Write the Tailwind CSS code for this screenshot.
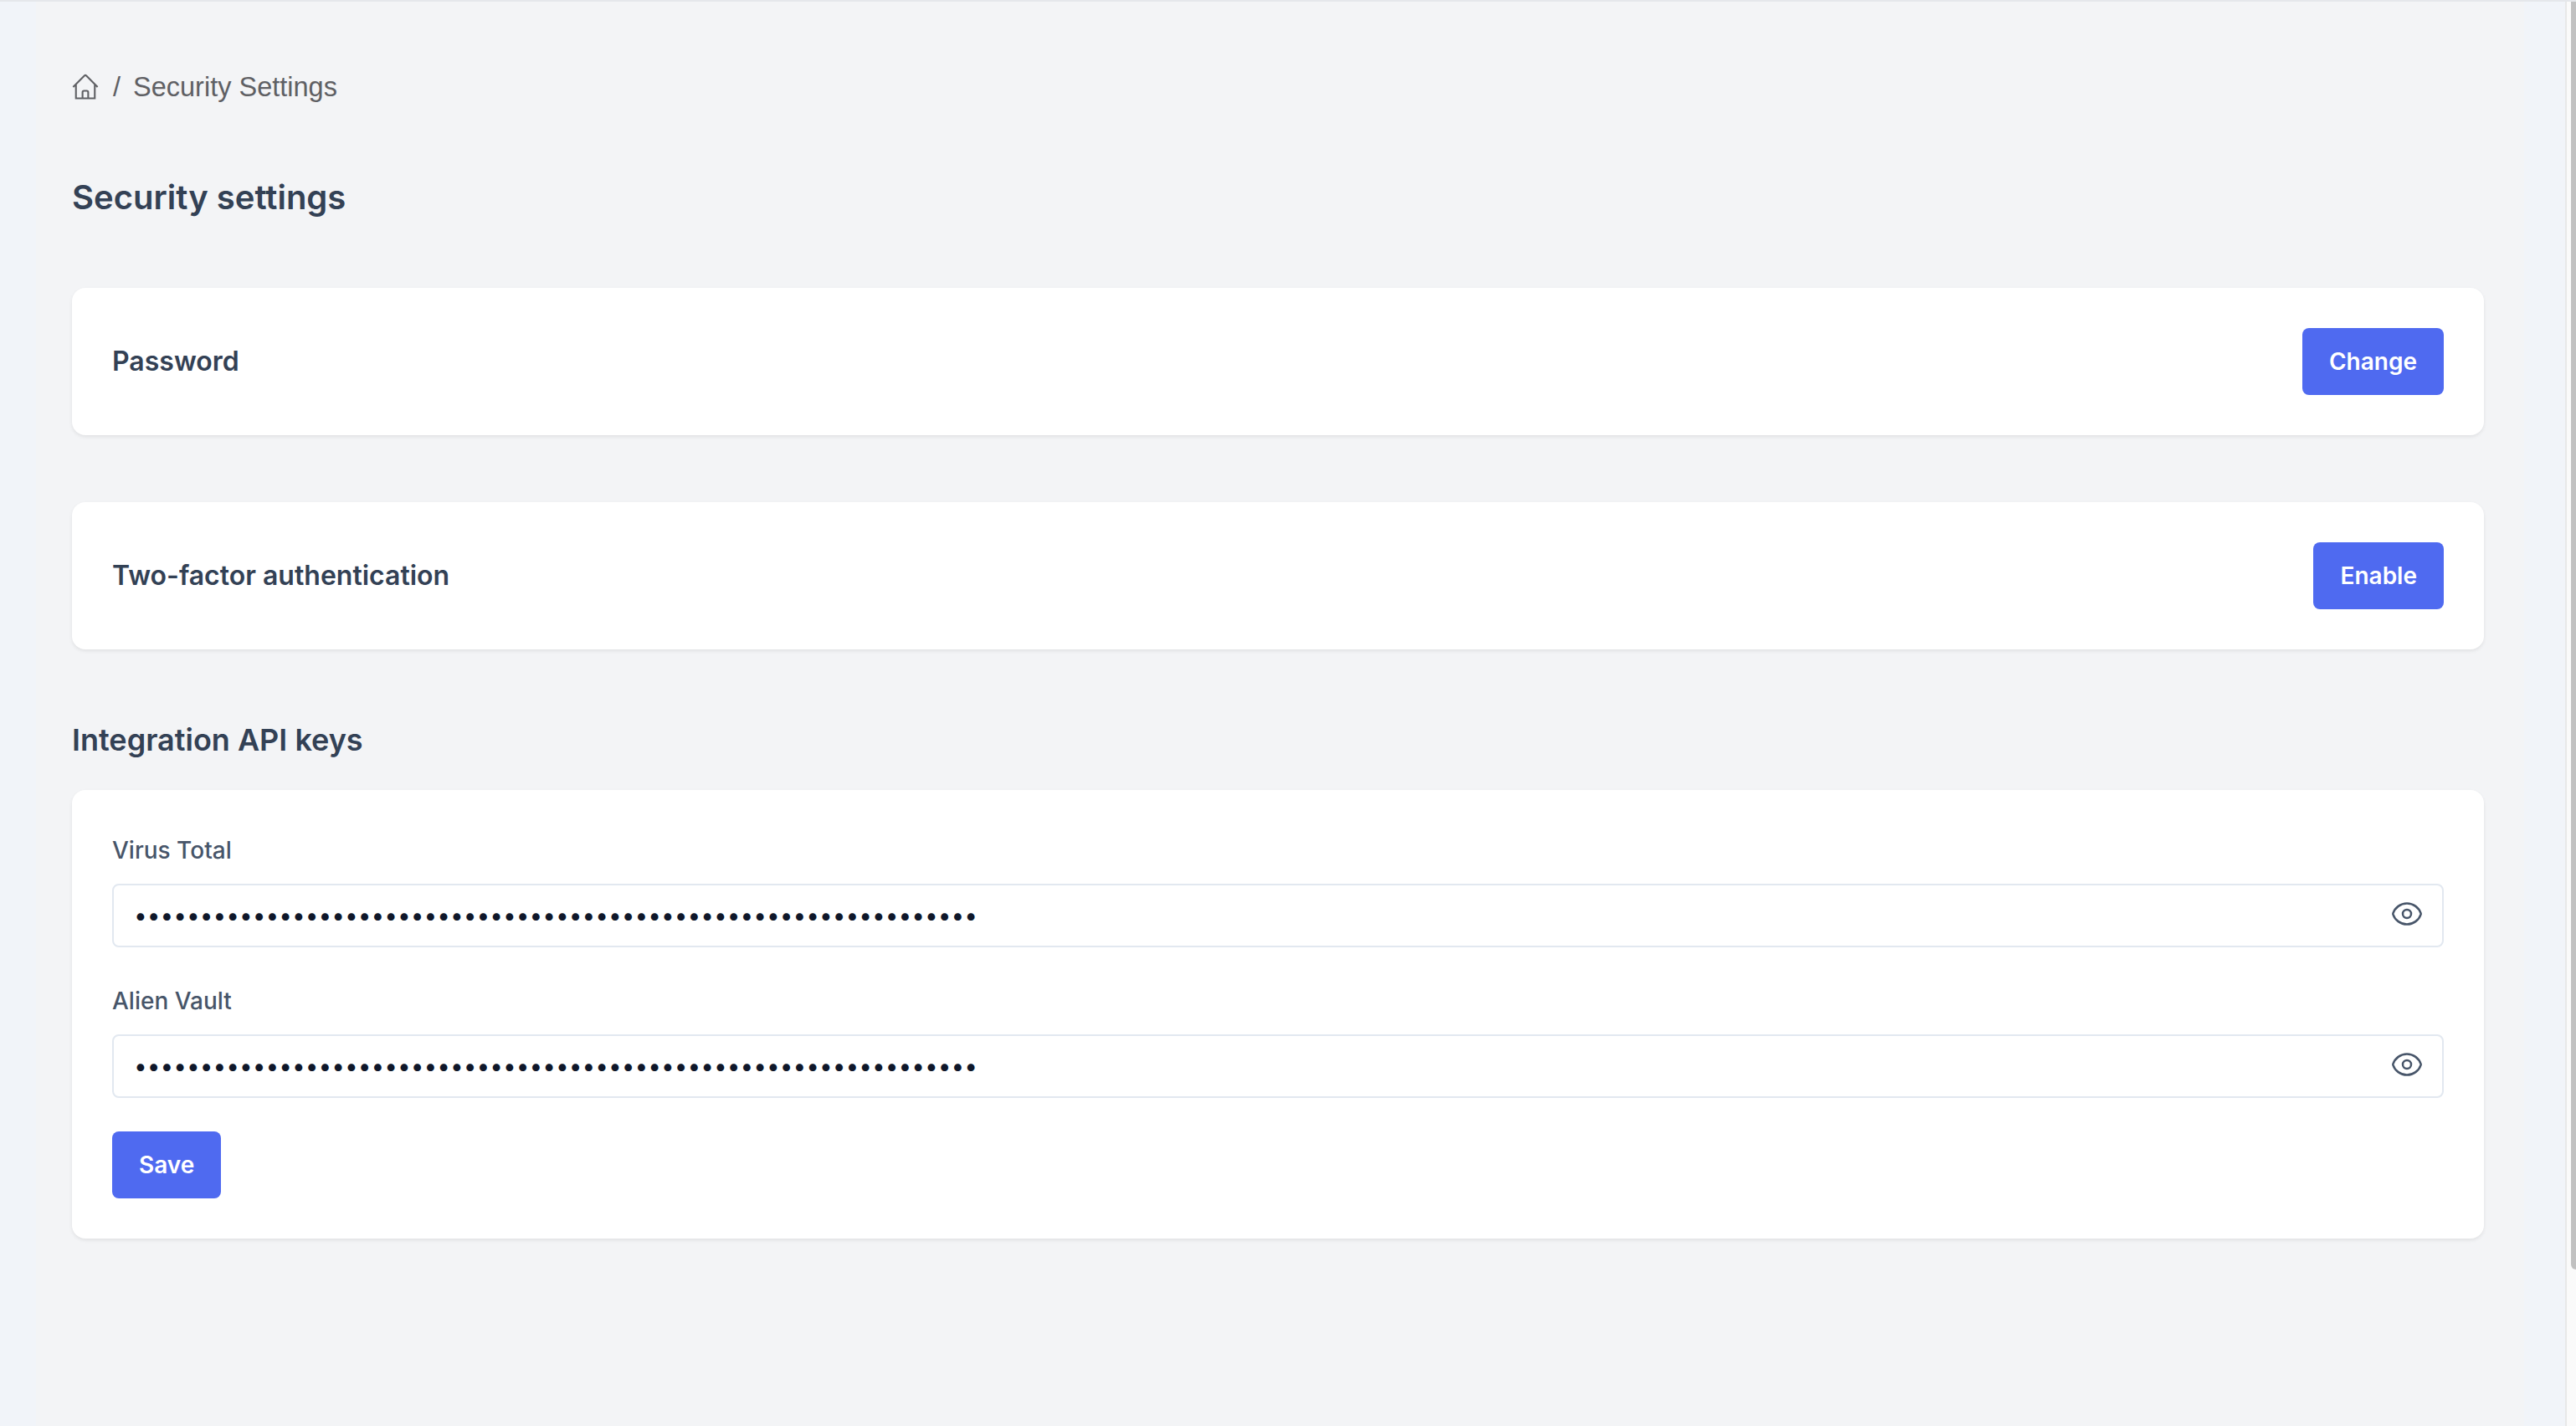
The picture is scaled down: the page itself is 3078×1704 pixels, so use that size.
<!DOCTYPE html>
<html lang="en">
<head>
  <meta charset="UTF-8">
  <title>Security Settings</title>
  <script src="https://cdn.jsdelivr.net/npm/@tailwindcss/browser@4"></script>
</head>
<body class="bg-[#f3f4f6] font-['Inter',sans-serif] overflow-hidden">
  <div class="flex h-screen border-t-2 border-[#e5e7eb]">
    <div class="w-[43px] shrink-0 bg-[#f1f4f9]"></div>

    <main class="w-[2973px] shrink-0 pl-[43px] pr-[48px]">
      <!-- Breadcrumb -->
      <nav class="flex items-center h-[36px] mt-[84px] font-['Liberation_Sans',sans-serif] text-[32.5px] text-[#5f6064]">
        <svg class="w-[36px] h-[36px] -ml-[2px]" viewBox="0 0 24 24" fill="none" stroke="currentColor" stroke-width="1.4">
          <path d="m2.25 12 8.954-8.955c.44-.439 1.152-.439 1.591 0L21.75 12M4.5 9.75V21H9.75v-4.875c0-.621.504-1.125 1.125-1.125h2.25c.621 0 1.125.504 1.125 1.125V21h5.25V9.75M8.25 21h8.25"/>
        </svg>
        <span class="ml-[15px]">/</span>
        <span class="ml-[15px]">Security Settings</span>
      </nav>

      <h1 class="mt-[86px] text-[40px] leading-[56px] font-semibold text-[#334155]">Security settings</h1>

      <section class="mt-[80px] h-[176px] flex items-center justify-between px-[48px] bg-white rounded-[16px] shadow-[0_2px_4px_rgba(0,0,0,0.08)]">
        <h2 class="text-[32px] font-semibold text-[#334155]">Password</h2>
        <button class="h-[80px] px-[32px] rounded-[8px] bg-[#4f6af0] text-white text-[28px] font-semibold">Change</button>
      </section>

      <section class="mt-[80px] h-[176px] flex items-center justify-between px-[48px] bg-white rounded-[16px] shadow-[0_2px_4px_rgba(0,0,0,0.08)]">
        <h2 class="text-[32px] font-semibold text-[#334155]">Two-factor authentication</h2>
        <button class="h-[80px] px-[32px] rounded-[8px] bg-[#4f6af0] text-white text-[28px] font-semibold">Enable</button>
      </section>

      <h2 class="mt-[84px] text-[36px] leading-[48px] font-semibold text-[#334155]">Integration API keys</h2>

      <section class="mt-[36px] h-[536px] px-[48px] pt-[52px] bg-white rounded-[16px] shadow-[0_2px_4px_rgba(0,0,0,0.08)]">
        <label class="block text-[28px] leading-[40px] font-medium text-[#475569]">Virus Total</label>
        <div class="mt-[20px] flex items-center h-[76px] pl-[24px] pr-[22px] border-2 border-[#e2e8f0] rounded-[8px]">
          <input type="password" value="aaaaaaaaaaaaaaaaaaaaaaaaaaaaaaaaaaaaaaaaaaaaaaaaaaaaaaaaaaaaaaaa" class="flex-1 text-[28px] text-[#0f172a] outline-none">
          <svg class="w-[40px] h-[40px] -mt-[4px] text-[#475569]" viewBox="0 0 24 24" fill="none" stroke="currentColor" stroke-width="1.5">
            <path d="M2.036 12.322a1.012 1.012 0 0 1 0-.639C3.423 7.51 7.36 4.5 12 4.5c4.638 0 8.573 3.007 9.963 7.178.07.207.07.431 0 .639C20.577 16.49 16.64 19.5 12 19.5c-4.638 0-8.573-3.007-9.963-7.178Z"/>
            <path d="M15 12a3 3 0 1 1-6 0 3 3 0 0 1 6 0Z"/>
          </svg>
        </div>

        <label class="block mt-[44px] text-[28px] leading-[40px] font-medium text-[#475569]">Alien Vault</label>
        <div class="mt-[20px] flex items-center h-[76px] pl-[24px] pr-[22px] border-2 border-[#e2e8f0] rounded-[8px]">
          <input type="password" value="aaaaaaaaaaaaaaaaaaaaaaaaaaaaaaaaaaaaaaaaaaaaaaaaaaaaaaaaaaaaaaaa" class="flex-1 text-[28px] text-[#0f172a] outline-none">
          <svg class="w-[40px] h-[40px] -mt-[4px] text-[#475569]" viewBox="0 0 24 24" fill="none" stroke="currentColor" stroke-width="1.5">
            <path d="M2.036 12.322a1.012 1.012 0 0 1 0-.639C3.423 7.51 7.36 4.5 12 4.5c4.638 0 8.573 3.007 9.963 7.178.07.207.07.431 0 .639C20.577 16.49 16.64 19.5 12 19.5c-4.638 0-8.573-3.007-9.963-7.178Z"/>
            <path d="M15 12a3 3 0 1 1-6 0 3 3 0 0 1 6 0Z"/>
          </svg>
        </div>

        <button class="mt-[40px] h-[80px] px-[32px] rounded-[8px] bg-[#4f6af0] text-white text-[28px] font-semibold">Save</button>
      </section>
    </main>

    <div class="w-[49px] shrink-0 bg-[#f1f4f9]"></div>

    <!-- Scrollbar -->
    <div class="w-[13px] shrink-0 flex justify-end bg-[#fafafa] border-l-2 border-[#e8e8e8]">
      <div class="w-[6px] h-[1515px] bg-[#c1c1c1] rounded-bl-[6px]"></div>
    </div>
  </div>
</body>
</html>
